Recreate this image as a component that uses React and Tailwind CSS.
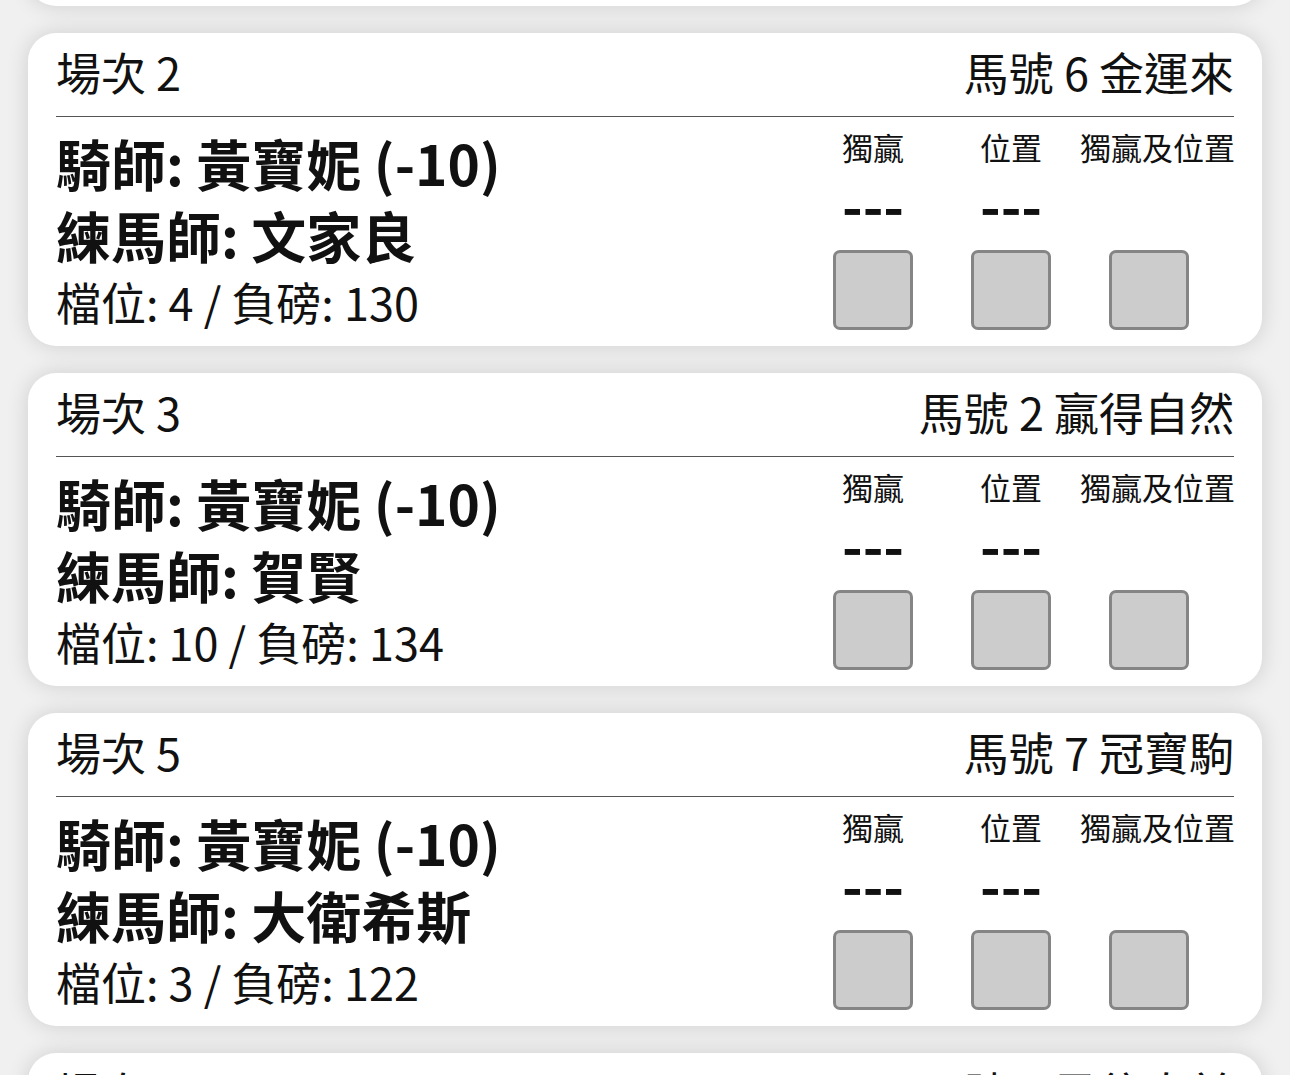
import React from 'react'

const races = [
  { race: '場次 1', horse: '馬號 3 好好先生', jockey: '騎師: 黃寶妮 (-10)', trainer: '練馬師: 呂健威', draw: '檔位: 8 / 負磅: 126' },
  { race: '場次 2', horse: '馬號 6 金運來', jockey: '騎師: 黃寶妮 (-10)', trainer: '練馬師: 文家良', draw: '檔位: 4 / 負磅: 130' },
  { race: '場次 3', horse: '馬號 2 贏得自然', jockey: '騎師: 黃寶妮 (-10)', trainer: '練馬師: 賀賢', draw: '檔位: 10 / 負磅: 134' },
  { race: '場次 5', horse: '馬號 7 冠寶駒', jockey: '騎師: 黃寶妮 (-10)', trainer: '練馬師: 大衛希斯', draw: '檔位: 3 / 負磅: 122' },
  { race: '場次 6', horse: '馬號 1 勇往直前', jockey: '騎師: 黃寶妮 (-10)', trainer: '練馬師: 姚本輝', draw: '檔位: 5 / 負磅: 128' },
]

function Box() {
  return <div className="h-[80px] w-[80px] rounded-[7px] border-[3px] border-[#858585] bg-[#cccccc]" />
}

function RaceCard({ r }) {
  return (
    <div className="shrink-0 rounded-[28px] bg-white px-[28px] shadow-[0_0_22px_rgba(0,0,0,0.14)]">
      {/* header */}
      <div className="flex h-[84px] items-center justify-between border-b border-[#555] pb-[7px] text-[45px] leading-none">
        <span>{r.race}</span>
        <span>{r.horse}</span>
      </div>

      <div className="flex justify-between pb-[12px] pt-[9px]">
        <div>
          <p className="text-[55px] font-bold leading-[72px]">{r.jockey}</p>
          <p className="text-[55px] font-bold leading-[72px]">{r.trainer}</p>
          <p className="text-[45px] leading-[64px]">{r.draw}</p>
        </div>

        {/* bets */}
        <div className="mt-[1px] flex">
          <div className="flex w-[80px] flex-col items-center">
            <span className="whitespace-nowrap text-[31px] leading-[40px]">獨贏</span>
            <span className="mt-[11px] text-[56px] font-bold leading-[52px]">---</span>
            <div className="mt-[20px]"><Box /></div>
          </div>
          <div className="ml-[58px] flex w-[80px] flex-col items-center">
            <span className="whitespace-nowrap text-[31px] leading-[40px]">位置</span>
            <span className="mt-[11px] text-[56px] font-bold leading-[52px]">---</span>
            <div className="mt-[20px]"><Box /></div>
          </div>
          <div className="ml-[29px] flex w-[154px] flex-col">
            <span className="whitespace-nowrap text-center text-[31px] leading-[40px]">獨贏及位置</span>
            <span className="mt-[11px] h-[52px]" />
            <div className="ml-[29px] mt-[20px]"><Box /></div>
          </div>
        </div>
      </div>
    </div>
  )
}

export default function App() {
  return (
    <div
      className="h-[1075px] overflow-hidden bg-[#f0f0f0] text-[#111]"
      style={{ fontFamily: '"Noto Sans CJK TC", "Noto Sans", sans-serif' }}
    >
      <div className="-mt-[307px] flex flex-col gap-[27px] px-[28px]">
        {races.map((r) => (
          <RaceCard key={r.race} r={r} />
        ))}
      </div>
    </div>
  )
}
